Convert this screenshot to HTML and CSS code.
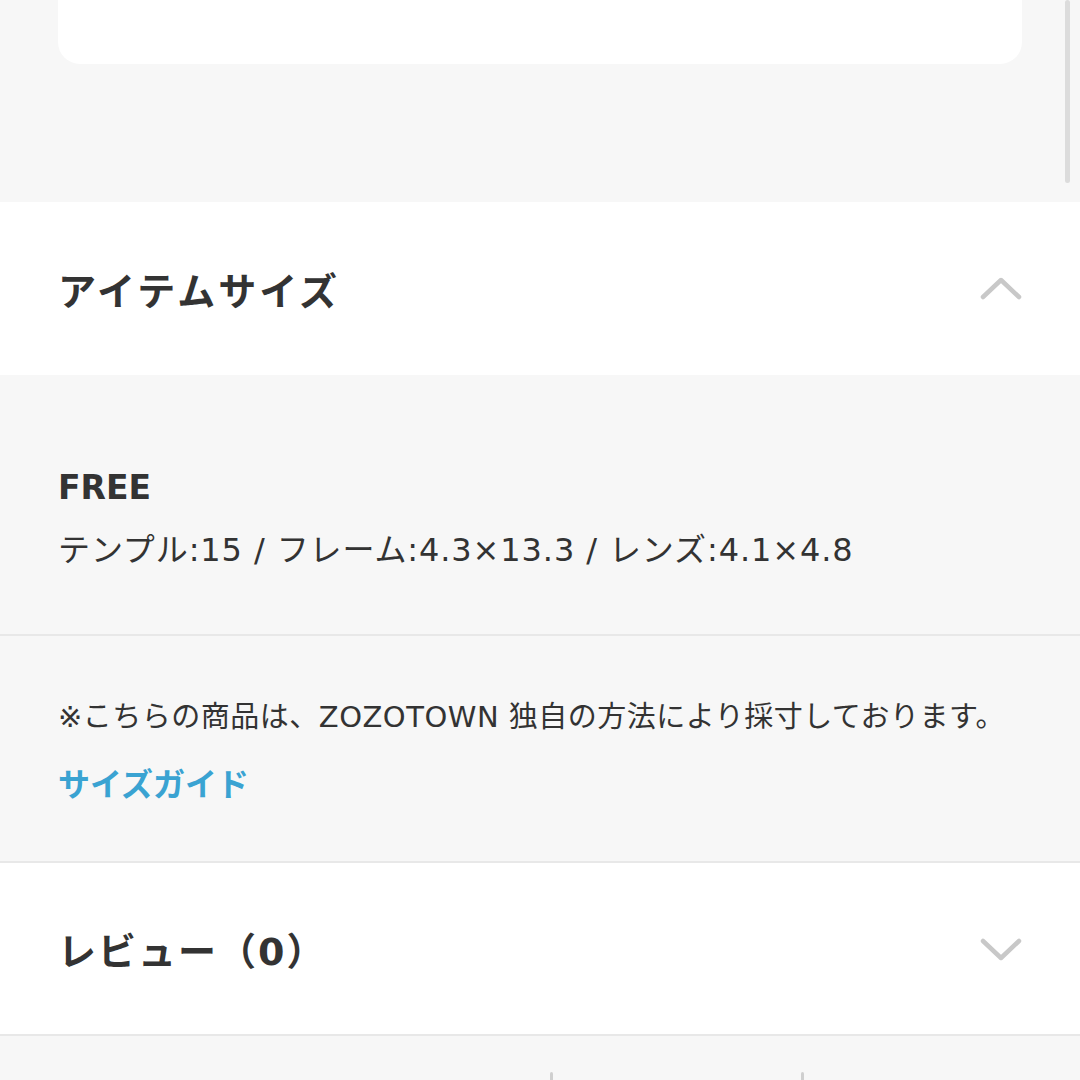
FILE: index.html
```html
<!doctype html>
<html lang="ja">
<head>
    <meta charset="utf-8">
    <meta name="viewport" content="width=device-width, initial-scale=1">
    <title>アイテムサイズ</title>
    <link rel="stylesheet" href="styles.css">
</head>
<body>
    <div class="page">
        <!-- previous card, cut off by the top of the view -->
        <div class="topArea">
            <div class="card"></div>
        </div>
        <div class="scrollbar"></div>

        <section class="accordion">
            <h2 class="accordionTitle">アイテムサイズ</h2>
            <svg class="chevron" width="44" height="26" viewBox="0 0 44 26">
                <polyline points="3,21 21,4 39,21" />
            </svg>
        </section>

        <div class="sizeBody">
            <p class="sizeName">FREE</p>
            <p class="sizeDetail">テンプル:15 / フレーム:4.3×13.3 / レンズ:4.1×4.8</p>
        </div>

        <div class="sizeNote">
            <p class="noteText">※こちらの商品は、ZOZOTOWN 独自の方法により採寸しております。</p>
            <a class="guideLink" href="#">サイズガイド</a>
        </div>

        <section class="accordion review">
            <h2 class="accordionTitle">レビュー（0）</h2>
            <svg class="chevron" width="44" height="26" viewBox="0 0 44 26">
                <polyline points="3,5 21,22 39,5" />
            </svg>
        </section>

        <div class="footerRow">
            <span class="tick tickLeft"></span>
            <span class="tick tickRight"></span>
        </div>
    </div>
</body>
</html>
```

FILE: styles.css
```css
html, body {
    width: 100%;
    height: 100%;
}

body {
    margin: 0;
    padding: 0;
    background: #f7f7f7;
    color: #333;
    font-family: "DejaVu Sans", "Noto Sans CJK JP", sans-serif;
    overflow: hidden;
}

p {
    margin: 0;
}

.page {
    position: relative;
    width: 1080px;
}

.topArea {
    height: 202px;
    padding: 0 58px;
    box-sizing: border-box;
}

.card {
    height: 64px;
    background: #fff;
    border-radius: 0 0 22px 22px;
}

/* overlay scrollbar */
.scrollbar {
    position: absolute;
    top: 0;
    right: 10px;
    width: 5px;
    height: 183px;
    background: #dcdcdc;
    border-radius: 3px;
}

.accordion {
    height: 173px;
    background: #fff;
    display: flex;
    align-items: center;
    justify-content: space-between;
    padding: 0 58px 0 58px;
    box-sizing: border-box;
}

.accordion.review {
    height: 175px;
    border-top: 2px solid #e8e8e8;
    border-bottom: 2px solid #e8e8e8;
}

.accordionTitle {
    margin: 0;
    font-family: "Noto Sans CJK JP", sans-serif;
    font-size: 38px;
    font-weight: bold;
    color: #333;
    letter-spacing: 3px;
}

.review .accordionTitle {
    font-family: "DejaVu Sans", "Noto Sans CJK JP", sans-serif;
    letter-spacing: 2px;
}

.chevron {
    margin-right: -2px;
}

.chevron polyline {
    fill: none;
    stroke: #c8c8c8;
    stroke-width: 4.5;
    stroke-linecap: round;
    stroke-linejoin: round;
}

.sizeBody {
    height: 261px;
    padding: 89px 58px 0;
    box-sizing: border-box;
    border-bottom: 2px solid #e8e8e8;
}

.sizeName {
    font-size: 33px;
    font-weight: bold;
    line-height: 48px;
}

.sizeDetail {
    font-size: 32px;
    line-height: 48px;
    margin-top: 14px;
    letter-spacing: 0.9px;
}

.sizeNote {
    height: 225px;
    padding: 61px 58px 0;
    box-sizing: border-box;
}

.noteText {
    font-size: 29px;
    line-height: 40px;
    letter-spacing: 0.5px;
}

.guideLink {
    display: block;
    margin-top: 22px;
    font-family: "Noto Sans CJK JP", sans-serif;
    font-size: 32px;
    line-height: 46px;
    font-weight: bold;
    color: #3aa3d2;
    text-decoration: none;
}

.footerRow {
    height: 60px;
    position: relative;
}

.tick {
    position: absolute;
    top: 36px;
    width: 3px;
    height: 12px;
    border-radius: 2px;
    background: #cfcfcf;
}

.tickLeft {
    left: 550px;
}

.tickRight {
    left: 801px;
}
```
